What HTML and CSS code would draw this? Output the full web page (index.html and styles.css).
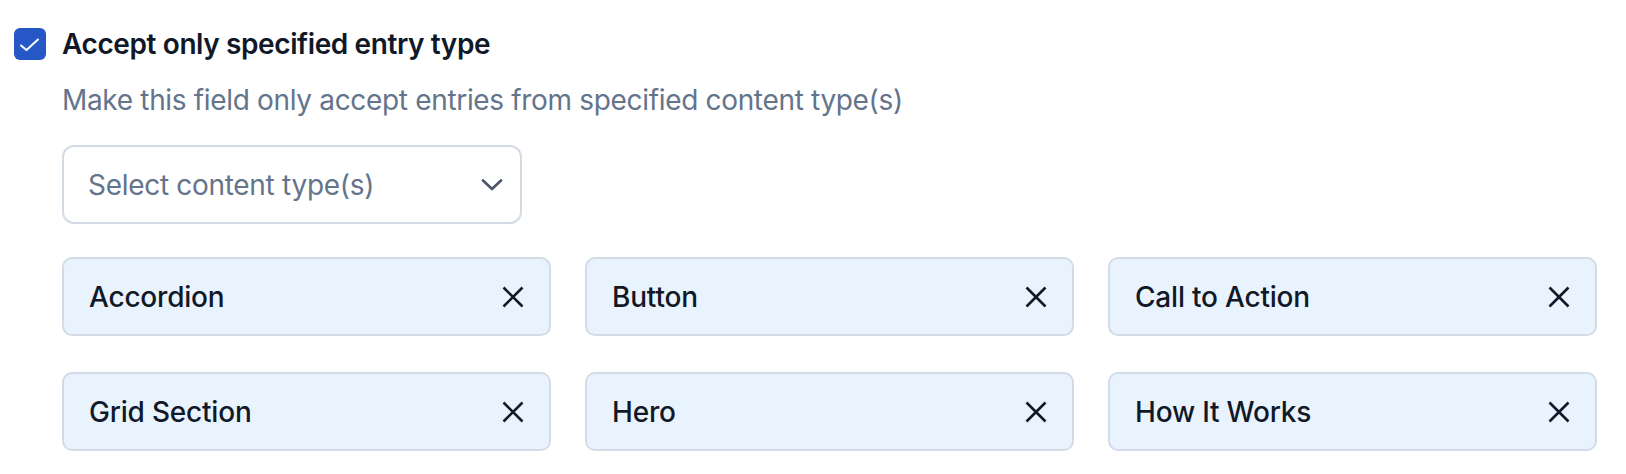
FILE: index.html
```html
<!DOCTYPE html>
<html lang="en">
<head>
    <meta charset="UTF-8">
    <title>Accept only specified entry type</title>
    <link rel="stylesheet" href="styles.css">
</head>
<body>
    <div class="field">
        <label class="check-row">
            <span class="checkbox">
                <svg width="32" height="32" viewBox="0 0 32 32"><polyline points="7,17.5 12.5,22 24,11.5" fill="none" stroke="#fff" stroke-width="2" stroke-linecap="round" stroke-linejoin="round"/></svg>
            </span>
            <span class="title">Accept only specified entry type</span>
        </label>

        <div class="field-body">
            <p class="hint">Make this field only accept entries from specified content type(s)</p>

            <div class="select">
                <span class="placeholder">Select content type(s)</span>
                <svg class="chevron" width="22" height="12" viewBox="0 0 22 12"><polyline points="2,1.5 11,10 20,1.5" fill="none" stroke="#4b5568" stroke-width="2.6" stroke-linecap="round" stroke-linejoin="round"/></svg>
            </div>

            <div class="chips">
                <div class="chip"><span>Accordion</span><svg class="close" width="22" height="22" viewBox="0 0 22 22"><path d="M1.5 1.5L20.5 20.5M20.5 1.5L1.5 20.5" stroke="#111827" stroke-width="2.6"/></svg></div>
                <div class="chip"><span>Button</span><svg class="close" width="22" height="22" viewBox="0 0 22 22"><path d="M1.5 1.5L20.5 20.5M20.5 1.5L1.5 20.5" stroke="#111827" stroke-width="2.6"/></svg></div>
                <div class="chip"><span>Call to Action</span><svg class="close" width="22" height="22" viewBox="0 0 22 22"><path d="M1.5 1.5L20.5 20.5M20.5 1.5L1.5 20.5" stroke="#111827" stroke-width="2.6"/></svg></div>
                <div class="chip"><span>Grid Section</span><svg class="close" width="22" height="22" viewBox="0 0 22 22"><path d="M1.5 1.5L20.5 20.5M20.5 1.5L1.5 20.5" stroke="#111827" stroke-width="2.6"/></svg></div>
                <div class="chip"><span>Hero</span><svg class="close" width="22" height="22" viewBox="0 0 22 22"><path d="M1.5 1.5L20.5 20.5M20.5 1.5L1.5 20.5" stroke="#111827" stroke-width="2.6"/></svg></div>
                <div class="chip"><span>How It Works</span><svg class="close" width="22" height="22" viewBox="0 0 22 22"><path d="M1.5 1.5L20.5 20.5M20.5 1.5L1.5 20.5" stroke="#111827" stroke-width="2.6"/></svg></div>
            </div>
        </div>
    </div>
</body>
</html>
```

FILE: styles.css
```css
body {
    margin: 0;
    background: #fff;
    font-family: Inter, "Noto Sans", sans-serif;
    color: #111827;
}
.field {
    padding: 24px 29px 0 14px;
}
.check-row {
    display: flex;
    align-items: center;
    gap: 16px;
    height: 40px;
}
.checkbox {
    display: flex;
    width: 32px;
    height: 32px;
    border-radius: 6px;
    background: #2557c7;
}
.title {
    font-size: 28px;
    font-weight: 600;
    line-height: 40px;
    letter-spacing: -0.4px;
}
.field-body {
    margin-left: 48px;
}
.hint {
    margin: 16px 0 0;
    font-size: 28px;
    line-height: 40px;
    letter-spacing: -0.33px;
    color: #64748b;
}
.select {
    display: flex;
    align-items: center;
    justify-content: space-between;
    box-sizing: border-box;
    width: 460px;
    height: 79px;
    margin-top: 25px;
    padding: 0 17px 0 24px;
    border: 2px solid #d3dbe4;
    border-radius: 12px;
}
.placeholder {
    font-size: 28px;
    letter-spacing: -0.3px;
    color: #64748b;
}
.chips {
    display: grid;
    grid-template-columns: repeat(3, 1fr);
    column-gap: 34px;
    row-gap: 36px;
    margin-top: 33px;
}
.chip {
    display: flex;
    align-items: center;
    justify-content: space-between;
    box-sizing: border-box;
    height: 79px;
    padding: 0 25px;
    border: 2px solid #d3dce6;
    border-radius: 10px;
    background: #e9f3fd;
    font-size: 28px;
    font-weight: 500;
    letter-spacing: -0.2px;
}
```
